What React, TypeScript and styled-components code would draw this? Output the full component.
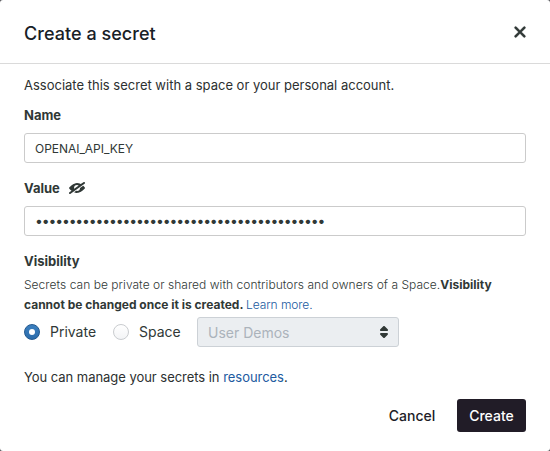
import React from "react";
import styled, { createGlobalStyle } from "styled-components";

const GlobalStyle = createGlobalStyle`
  * { box-sizing: border-box; }
  body { margin: 0; background: #55565a; font-family: Inter, sans-serif; color: #2c3030; }
  a { color: #215aa0; text-decoration: none; }
`;

const Dialog = styled.section`
  display: flex;
  flex-direction: column;
  width: 550px;
  height: 451px;
  background: #fff;
  border-radius: 3px;
`;

const Header = styled.header`
  display: flex;
  align-items: center;
  justify-content: space-between;
  height: 64px;
  padding: 4px 19px 0 24px;
  border-bottom: 1px solid #dadada;
`;

const Title = styled.h1`
  margin: 0;
  padding-top: 1px;
  font-size: 18px;
  line-height: 24px;
  letter-spacing: 0.04px;
  font-weight: 500;
  color: #182026;
`;

const IconButton = styled.button`
  display: flex;
  margin-bottom: 3px;
  padding: 0;
  border: 0;
  background: none;
  color: #303836;
`;

const Body = styled.div`
  display: flex;
  flex-direction: column;
  padding: 11px 24px 0;
`;

const Text = styled.p`
  margin: 0;
  font-size: 13px;
  line-height: 20px;
`;

const Label = styled.label<{ $top: number }>`
  display: flex;
  align-items: center;
  gap: 9px;
  height: 20px;
  margin-top: ${(p) => p.$top}px;
  font-size: 13px;
  font-weight: 650;
  color: #303836;
`;

const Field = styled.input<{ $masked?: boolean }>`
  height: 30px;
  margin-top: 8px;
  padding: ${(p) => (p.$masked ? "0 10px 2px" : "0 10px")};
  border: 1px solid #cbcbcb;
  border-radius: 3px;
  outline: none;
  background: #fff;
  color: #303836;
  font-family: Inter, sans-serif;
  font-size: ${(p) => (p.$masked ? 14 : 12)}px;
  letter-spacing: ${(p) => (p.$masked ? "-1.15px" : "-0.03px")};
`;

const Hint = styled.p`
  margin: 4px 0 0;
  font-size: 12px;
  line-height: 20px;
  letter-spacing: 0.037px;
  font-weight: 300;
  color: #303836;
  white-space: nowrap;
  b { font-weight: 700; letter-spacing: 0; }
  a { margin-left: -0.8px; letter-spacing: -0.08px; }
`;

const Choices = styled.div`
  display: flex;
  align-items: center;
  height: 30px;
  margin-top: 2px;
`;

const Choice = styled.label<{ $width: number }>`
  display: flex;
  align-items: center;
  gap: 10px;
  width: ${(p) => p.$width}px;
  font-size: 14px;
  color: #303836;
`;

const ChoiceText = styled.span`
  padding-bottom: 1px;
`;

const Radio = styled.span<{ $checked?: boolean }>`
  display: flex;
  align-items: center;
  justify-content: center;
  width: 16px;
  height: 16px;
  border-radius: 50%;
  border: 1px solid ${(p) => (p.$checked ? "#23598f" : "#c9cccf")};
  background: ${(p) =>
    p.$checked ? "linear-gradient(#3b7fbf, #2b6cab)" : "linear-gradient(#ffffff, #f3f4f6)"};
  &::after {
    content: "";
    width: 6px;
    height: 6px;
    border-radius: 50%;
    background: ${(p) => (p.$checked ? "#fff" : "transparent")};
  }
`;

const Select = styled.div`
  display: flex;
  align-items: center;
  justify-content: space-between;
  width: 202px;
  height: 30px;
  padding: 0 6px 0 10px;
  border: 1px solid #ccd1d6;
  border-radius: 3px;
  background: #ebeef1;
  color: #abb3bb;
  font-size: 14px;
  svg { color: #303836; }
`;

const Footer = styled.footer`
  display: flex;
  justify-content: flex-end;
  gap: 10px;
  padding: 12px 24px 0;
`;

const Button = styled.button<{ $primary?: boolean }>`
  width: ${(p) => (p.$primary ? 69 : 70)}px;
  height: 33px;
  padding: 0;
  border: 0;
  border-radius: 3px;
  font-family: Inter, sans-serif;
  font-size: 14px;
  font-weight: ${(p) => (p.$primary ? 550 : 500)};
  color: ${(p) => (p.$primary ? "#fff" : "#211c27")};
  background: ${(p) => (p.$primary ? "#211c27" : "transparent")};
`;

const Cross = () => (
  <svg width="22" height="22" viewBox="0 0 20 20" fill="currentColor" stroke="currentColor" strokeWidth="0.3">
    <path d="M11.41 10l3.29-3.29c.19-.18.3-.43.3-.71a1.003 1.003 0 00-1.71-.71L10 8.59l-3.29-3.3a1.003 1.003 0 00-1.42 1.42L8.59 10 5.3 13.29c-.19.18-.3.43-.3.71a1.003 1.003 0 001.71.71l3.29-3.3 3.29 3.29c.18.19.43.3.71.3a1.003 1.003 0 00.71-1.71L11.41 10z" />
  </svg>
);

const EyeOff = () => (
  <svg width="16" height="16" viewBox="0 0 16 16" fill="currentColor" fillRule="evenodd">
    <path d="M16 7.97v-.02-.01-.02-.02a.675.675 0 00-.17-.36c-.49-.63-1.07-1.2-1.65-1.72l-3.16 2.26a2.978 2.978 0 01-2.98 2.9c-.31 0-.6-.06-.88-.15L5.09 12.3c.44.19.9.36 1.37.47.97.23 1.94.24 2.92.05.88-.17 1.74-.54 2.53-.98 1.25-.7 2.39-1.67 3.38-2.75.18-.2.37-.41.53-.62.09-.1.15-.22.17-.36v-.02-.02-.01-.02V8v-.03zm-.43-4.17c.25-.18.43-.46.43-.8 0-.55-.45-1-1-1-.22 0-.41.08-.57.2l-.01-.01-2.67 1.91c-.69-.38-1.41-.69-2.17-.87a6.8 6.8 0 00-2.91-.05c-.88.18-1.74.54-2.53.99-1.25.7-2.39 1.67-3.38 2.75-.18.2-.37.41-.53.62-.23.29-.23.63-.01.92.51.66 1.11 1.25 1.73 1.79.18.16.38.29.56.44l-2.09 1.5.01.01c-.25.18-.43.46-.43.8 0 .55.45 1 1 1 .22 0 .41-.08.57-.2l.01.01 14-10-.01-.01zm-10.41 5a3.03 3.03 0 01-.11-.8 2.99 2.99 0 012.99-2.98c.62 0 1.19.21 1.66.53L5.16 8.8z" />
  </svg>
);

const DoubleCaret = () => (
  <svg width="16" height="16" viewBox="0 0 16 16" fill="currentColor">
    <path d="M5 7h6a1.003 1.003 0 00.71-1.71l-3-3C8.53 2.11 8.28 2 8 2s-.53.11-.71.29l-3 3A1.003 1.003 0 005 7zm6 2H5a1.003 1.003 0 00-.71 1.71l3 3c.18.18.43.29.71.29s.53-.11.71-.29l3-3A1.003 1.003 0 0011 9z" />
  </svg>
);

const ManageText = styled(Text)`
  margin-top: 20px;
  letter-spacing: -0.04px;
`;

export default function App() {
  return (
    <>
      <GlobalStyle />
      <Dialog>
        <Header>
          <Title>Create a secret</Title>
          <IconButton aria-label="Close"><Cross /></IconButton>
        </Header>
        <Body>
          <Text>Associate this secret with a space or your personal account.</Text>
          <Label $top={10}>Name</Label>
          <Field readOnly value="OPENAI_API_KEY" />
          <Label $top={15}>Value <EyeOff /></Label>
          <Field $masked readOnly value={"•".repeat(43)} />
          <Label $top={15}>Visibility</Label>
          <Hint>
            Secrets can be private or shared with contributors and owners of a Space.<b>Visibility</b>
            <br />
            <b>cannot be changed once it is created.</b> <a href="#">Learn more.</a>
          </Hint>
          <Choices>
            <Choice $width={89}><Radio $checked /><ChoiceText>Private</ChoiceText></Choice>
            <Choice $width={84}><Radio /><ChoiceText>Space</ChoiceText></Choice>
            <Select>User Demos <DoubleCaret /></Select>
          </Choices>
          <ManageText>You can manage your secrets in <a href="#">resources</a>.</ManageText>
        </Body>
        <Footer>
          <Button>Cancel</Button>
          <Button $primary>Create</Button>
        </Footer>
      </Dialog>
    </>
  );
}
